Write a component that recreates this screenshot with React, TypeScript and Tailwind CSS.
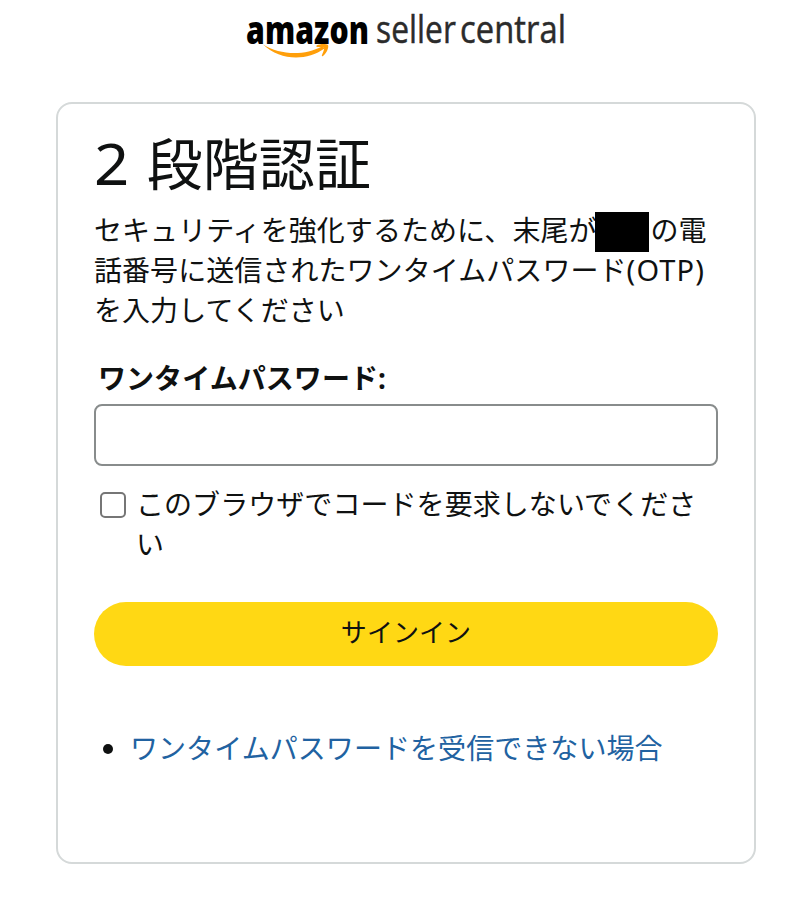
import { useState } from "react";

function Logo() {
  return (
    <svg
      width="322"
      height="62"
      viewBox="0 0 322 62"
      className="overflow-visible"
      role="img"
      aria-label="amazon seller central"
    >
      <g fontFamily="'Open Sans', sans-serif">
        <text x="-1" y="43.500" fontSize="38" fontWeight="800" fill="#000" textLength="123" lengthAdjust="spacingAndGlyphs">
          amazon
        </text>
        <text x="129" y="43" fontSize="38" fill="#2b2b2b" stroke="#2b2b2b" strokeWidth="0.5" textLength="80" lengthAdjust="spacingAndGlyphs">
          seller
        </text>
        <text x="213" y="43" fontSize="38" fill="#2b2b2b" stroke="#2b2b2b" strokeWidth="0.5" textLength="106" lengthAdjust="spacingAndGlyphs">
          central
        </text>
      </g>
      <path d="M16 44.500C33 55 57 56 75 46.500L77.500 48.500C59 61.500 33 60.500 16 44.500Z" fill="#ff9f0a" />
      <path d="M69.500 45.500C73 43.500 79 43.500 81 45C82 47 80 53 76 56C75 56.500 74.500 56 75 55C76 52.500 77.500 49 77 48C76 47 72 47 69.500 47Z" fill="#ff9f0a" />
    </svg>
  );
}

export default function App() {
  const [otp, setOtp] = useState("");
  const [remember, setRemember] = useState(false);

  return (
    <div
      lang="ja"
      className="min-h-[897px] bg-white font-['Noto_Sans','Noto_Sans_CJK_JP',sans-serif] text-[28px] leading-10 tracking-[0.06px] text-[#0f1111]"
    >
      <header className="flex h-[62px] justify-center pl-[6px]">
        <Logo />
      </header>

      <main className="ml-14 mt-10 h-[762px] w-[700px] rounded-2xl border-2 border-[#d5d9d9] px-9 pt-[23px]">
        <h1 className="h-[83px] whitespace-nowrap text-[56px] font-normal leading-[72px]">
          <span className="mr-1.5 inline-block origin-bottom-left scale-x-110">2</span> 段階認証
        </h1>

        <p className="whitespace-nowrap">
          セキュリティを強化するために、末尾が
          <span className="-mb-0.5 -ml-0.5 mr-0.5 mt-0.5 inline-block h-10 w-[54px] bg-black align-top" />
          の電
          <br />
          話番号に送信されたワンタイムパスワード
          <span className="text-[29px] leading-none tracking-[1.1px]">(OTP)</span>
          <br />
          を入力してください
        </p>

        <form onSubmit={(e) => e.preventDefault()}>
          <label htmlFor="otp" className="mt-7 block pl-1 font-bold">
            ワンタイムパスワード:
          </label>
          <input
            id="otp"
            value={otp}
            onChange={(e) => setOtp(e.target.value)}
            className="mt-1.5 block h-[62px] w-full rounded-lg border-2 border-[#888c8c] px-3 outline-none"
          />

          <label className="mt-[18px] flex items-start pl-1.5">
            <input
              type="checkbox"
              checked={remember}
              onChange={(e) => setRemember(e.target.checked)}
              className="mt-2 size-[26px] shrink-0 appearance-none rounded-[5px] border-2 border-[#767676] bg-white checked:bg-[#2162a1]"
            />
            <span className="ml-2.5">
              このブラウザでコードを要求しないでくださ
              <br />い
            </span>
          </label>

          <button
            type="submit"
            className="mt-[38px] block h-16 w-full rounded-full bg-[#ffd814] pb-1 text-[26px]"
          >
            サインイン
          </button>
        </form>

        <ul className="mt-[62px]">
          <li className="flex items-center">
            <span className="ml-[9px] mr-[17px] mt-0.5 size-2.5 rounded-full bg-[#0f1111]" />
            <a href="#" className="text-[#2162a1]">
              ワンタイムパスワードを受信できない場合
            </a>
          </li>
        </ul>
      </main>
    </div>
  );
}
